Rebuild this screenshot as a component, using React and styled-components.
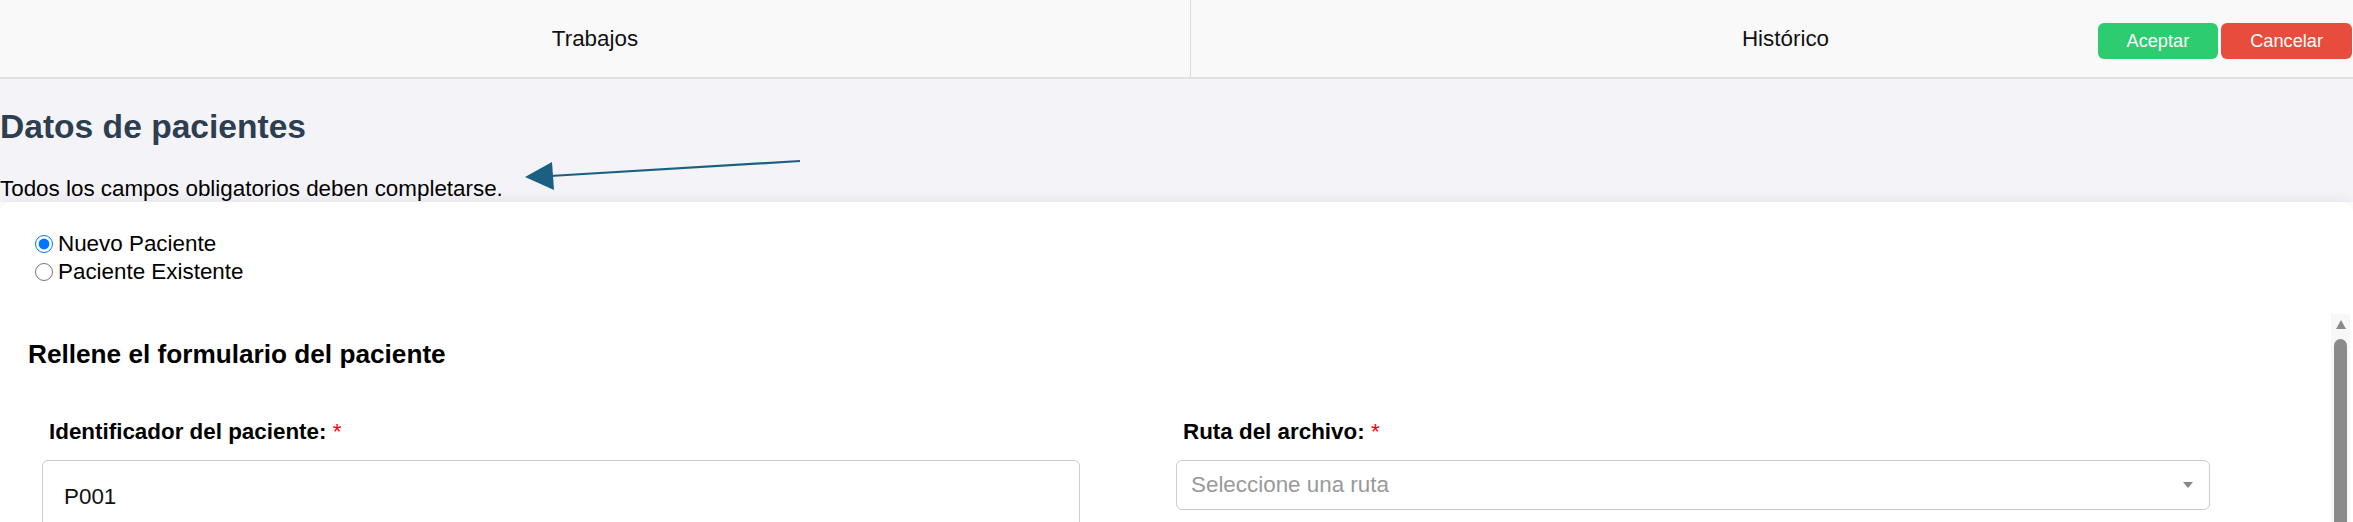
import { useState } from "react";
import styled, { createGlobalStyle } from "styled-components";

const GlobalStyle = createGlobalStyle`
  html, body {
    margin: 0;
    padding: 0;
    overflow: hidden;
  }
  body {
    font-family: "Liberation Sans", Arial, sans-serif;
    color: #000;
  }
  * { box-sizing: border-box; }
`;

const tabs = ["Trabajos", "Histórico"];

const App = () => {
  const [mode, setMode] = useState("nuevo");
  const [patientId, setPatientId] = useState("P001");

  return (
    <>
      <GlobalStyle />
      <Page>
        <Header>
          <TabBar>
            {tabs.map((t) => (
              <Tab key={t}>{t}</Tab>
            ))}
          </TabBar>
          <Actions>
            <ActionButton $color="#2ecc71">Aceptar</ActionButton>
            <ActionButton $color="#e74c3c">Cancelar</ActionButton>
          </Actions>
        </Header>

        <Intro>
          <Title>Datos de pacientes</Title>
          <Notice>Todos los campos obligatorios deben completarse.</Notice>
          <Arrow width="290" height="40" viewBox="0 0 290 40">
            <line x1="280" y1="6" x2="30" y2="21" stroke="#1a6083" strokeWidth="2.2" />
            <polygon points="5,22 32,7 34,35" fill="#1a6083" />
          </Arrow>
        </Intro>

        <Card>
          <RadioGroup>
            <RadioRow>
              <Radio
                type="radio"
                name="mode"
                checked={mode === "nuevo"}
                onChange={() => setMode("nuevo")}
              />
              Nuevo Paciente
            </RadioRow>
            <RadioRow>
              <Radio
                type="radio"
                name="mode"
                checked={mode === "existente"}
                onChange={() => setMode("existente")}
              />
              Paciente Existente
            </RadioRow>
          </RadioGroup>

          <ScrollArea>
            <FormTitle>Rellene el formulario del paciente</FormTitle>
            <FormGrid>
              <Field>
                <Label>
                  Identificador del paciente: <Req>*</Req>
                </Label>
                <TextInput
                  value={patientId}
                  onChange={(e) => setPatientId(e.target.value)}
                />
              </Field>
              <Field>
                <Label>
                  Ruta del archivo: <Req>*</Req>
                </Label>
                <Select>
                  <Placeholder>Seleccione una ruta</Placeholder>
                  <Caret />
                </Select>
              </Field>
            </FormGrid>
          </ScrollArea>

          <ScrollBar>
            <ScrollUp />
            <ScrollThumb />
          </ScrollBar>
        </Card>
      </Page>
    </>
  );
};

const Page = styled.div`
  height: 100vh;
  overflow: hidden;
  display: flex;
  flex-direction: column;
  background: #fff;
`;

const Header = styled.header`
  position: relative;
  flex: none;
  height: 79px;
  background: #f9f9f9;
  border-bottom: 2px solid #e2e2e2;
  overflow: hidden;
`;

const TabBar = styled.nav`
  display: flex;
  height: 77px;
`;

const Tab = styled.div`
  flex: none;
  width: 1190px;
  display: flex;
  align-items: center;
  justify-content: center;
  font-size: 22.4px;
  color: #111;
  & + & {
    border-left: 1px solid #dcdcdc;
  }
`;

const Actions = styled.div`
  position: absolute;
  top: 23px;
  right: 1px;
  display: flex;
  gap: 3px;
`;

const ActionButton = styled.button`
  height: 36px;
  padding: 0 29px;
  border: none;
  border-radius: 6px;
  background: ${(p) => p.$color};
  color: #fff;
  font-family: inherit;
  font-size: 18.2px;
`;

const Intro = styled.section`
  position: relative;
  flex: none;
  background: #f4f4f8;
  padding-top: 29px;
`;

const Title = styled.h1`
  margin: 0 0 30px 0;
  font-size: 33.6px;
  font-weight: bold;
  color: #2c3e50;
`;

const Notice = styled.p`
  margin: 0;
  font-size: 22.4px;
`;

const Arrow = styled.svg`
  position: absolute;
  left: 520px;
  top: 76px;
`;

const Card = styled.main`
  position: relative;
  flex: 1;
  min-height: 0;
  display: flex;
  flex-direction: column;
  background: #fff;
  border-radius: 10px 10px 0 0;
  box-shadow: 0 -3px 12px rgba(0, 0, 0, 0.06);
  padding-top: 28px;
`;

const RadioGroup = styled.div`
  padding-left: 28px;
`;

const RadioRow = styled.label`
  display: flex;
  align-items: center;
  height: 28px;
  font-size: 22.4px;
`;

const Radio = styled.input`
  width: 18px;
  height: 18px;
  margin: 0 5px 0 7px;
`;

const ScrollArea = styled.div`
  flex: 1;
  min-height: 0;
  margin-top: 28px;
  margin-right: 22px;
  padding: 25px 0 0 28px;
  overflow-y: auto;
  scrollbar-width: none;
`;

const ScrollBar = styled.div`
  position: absolute;
  top: 112px;
  right: 3px;
  bottom: 0;
  width: 19px;
  display: flex;
  flex-direction: column;
  align-items: center;
  padding-top: 6px;
  background: #f7f7f7;
`;

const ScrollUp = styled.span`
  width: 0;
  height: 0;
  border-left: 5px solid transparent;
  border-right: 5px solid transparent;
  border-bottom: 9px solid #8a8a8a;
`;

const ScrollThumb = styled.span`
  flex: 1;
  width: 13px;
  margin-top: 10px;
  background: #8a8a8a;
  border-radius: 7px 7px 0 0;
`;

const FormTitle = styled.h3`
  margin: 0;
  font-size: 26.2px;
  font-weight: bold;
`;

const FormGrid = styled.div`
  display: grid;
  grid-template-columns: 1038px 1034px;
  column-gap: 96px;
  margin-top: 49px;
  padding-left: 14px;
`;

const Field = styled.div`
  display: flex;
  flex-direction: column;
`;

const Label = styled.label`
  padding-left: 7px;
  margin-bottom: 15px;
  font-size: 22.4px;
  font-weight: bold;
`;

const Req = styled.span`
  color: #f00;
  font-weight: normal;
`;

const TextInput = styled.input`
  width: 100%;
  padding: 23px 21px;
  border: 1px solid #ccc;
  border-radius: 6px;
  font-family: inherit;
  font-size: 22.4px;
  color: #111;
  outline: none;
`;

const Select = styled.div`
  height: 50px;
  display: flex;
  align-items: center;
  justify-content: space-between;
  padding: 0 16px 0 14px;
  border: 1px solid #ccc;
  border-radius: 6px;
  font-size: 22.4px;
`;

const Placeholder = styled.span`
  color: #999;
`;

const Caret = styled.span`
  width: 0;
  height: 0;
  border-left: 5px solid transparent;
  border-right: 5px solid transparent;
  border-top: 6px solid #888;
`;

export default App;
